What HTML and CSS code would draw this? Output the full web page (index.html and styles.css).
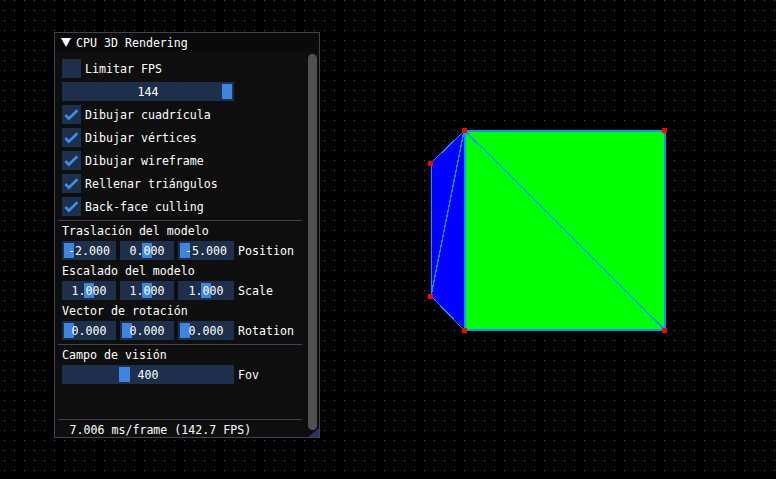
FILE: index.html
```html
<!DOCTYPE html>
<html lang="es">
<head>
<meta charset="utf-8">
<title>CPU 3D Rendering</title>
<link rel="stylesheet" href="styles.css">
</head>
<body>
<svg class="scene" width="776" height="479" viewBox="0 0 776 479" aria-hidden="true">
  <polygon class="face-blue" points="431,163 465,131 465,330 431,296"/>
  <rect class="face-green" x="465" y="131" width="199" height="199"/>
  <g class="wire">
    <line x1="431" y1="163" x2="431" y2="296"/>
    <line x1="431" y1="163" x2="464" y2="131"/>
    <line x1="431" y1="296" x2="464" y2="330"/>
    <line class="thick" x1="464" y1="131" x2="431" y2="296"/>
    <rect x="464.5" y="130.5" width="200" height="199"/>
    <line class="thick" x1="465" y1="131" x2="665" y2="330"/>
  </g>
  <g class="vertex">
    <rect x="462" y="128" width="5" height="5"/>
    <rect x="662" y="128" width="5" height="5"/>
    <rect x="462" y="328" width="5" height="5"/>
    <rect x="662" y="328" width="5" height="5"/>
    <rect x="428" y="161" width="5" height="5"/>
    <rect x="428" y="294" width="5" height="5"/>
  </g>
</svg>

<section class="window">
  <header class="title"><span class="arrow"></span><span>CPU 3D Rendering</span></header>
  <div class="content">
    <div class="main">
      <label class="check"><span class="box"></span>Limitar FPS</label>
      <div class="slider full"><span class="grab" style="left:160px"></span><span class="val">144</span></div>
      <label class="check"><span class="box"><svg viewBox="0 0 19 19" width="19" height="19"><polyline points="3.4,10 6.8,13.6 15.4,5.2"/></svg></span>Dibujar cuadrícula</label>
      <label class="check"><span class="box"><svg viewBox="0 0 19 19" width="19" height="19"><polyline points="3.4,10 6.8,13.6 15.4,5.2"/></svg></span>Dibujar vértices</label>
      <label class="check"><span class="box"><svg viewBox="0 0 19 19" width="19" height="19"><polyline points="3.4,10 6.8,13.6 15.4,5.2"/></svg></span>Dibujar wireframe</label>
      <label class="check"><span class="box"><svg viewBox="0 0 19 19" width="19" height="19"><polyline points="3.4,10 6.8,13.6 15.4,5.2"/></svg></span>Rellenar triángulos</label>
      <label class="check"><span class="box"><svg viewBox="0 0 19 19" width="19" height="19"><polyline points="3.4,10 6.8,13.6 15.4,5.2"/></svg></span>Back-face culling</label>
      <hr class="sep">
      <div class="text">Traslación del modelo</div>
      <div class="row">
        <div class="slider s1"><span class="grab" style="left:2px"></span><span class="val">-2.000</span></div>
        <div class="slider s2"><span class="grab" style="left:22px"></span><span class="val">0.000</span></div>
        <div class="slider s3"><span class="grab" style="left:2px"></span><span class="val">-5.000</span></div>
        <span class="lab">Position</span>
      </div>
      <div class="text">Escalado del modelo</div>
      <div class="row">
        <div class="slider s1"><span class="grab" style="left:22px"></span><span class="val">1.000</span></div>
        <div class="slider s2"><span class="grab" style="left:22px"></span><span class="val">1.000</span></div>
        <div class="slider s3"><span class="grab" style="left:23px"></span><span class="val">1.000</span></div>
        <span class="lab">Scale</span>
      </div>
      <div class="text">Vector de rotación</div>
      <div class="row">
        <div class="slider s1"><span class="grab" style="left:2px"></span><span class="val">0.000</span></div>
        <div class="slider s2"><span class="grab" style="left:2px"></span><span class="val">0.000</span></div>
        <div class="slider s3"><span class="grab" style="left:2px"></span><span class="val">0.000</span></div>
        <span class="lab">Rotation</span>
      </div>
      <hr class="sep">
      <div class="text">Campo de visión</div>
      <div class="row">
        <div class="slider full"><span class="grab wide" style="left:57px"></span><span class="val">400</span></div>
        <span class="lab">Fov</span>
      </div>
      <div class="footer">
        <hr class="sep">
        <div class="text fps">7.006 ms/frame (142.7 FPS)</div>
      </div>
    </div>
    <div class="scrollbar"><span class="thumb"></span></div>
  </div>
  <span class="grip"></span>
</section>
</body>
</html>
```

FILE: styles.css
```css
* { box-sizing: border-box; }

html, body { height: 100%; }

body {
  margin: 0;
  overflow: hidden;
  background-color: #000;
  background-image: conic-gradient(from 270deg at 1px 1px, #5a5a5a 25%, transparent 0);
  background-size: 10px 10px;
  background-position: 4px 0;
  color: #fff;
  font-family: "DejaVu Sans Mono", monospace;
  font-size: 11.62px;
  line-height: 15px;
}

.scene { position: absolute; left: 0; top: 0; shape-rendering: crispEdges; }
.face-blue { fill: #0000ff; }
.face-green { fill: #00ff00; }
.wire * { fill: none; stroke: #0a96ff; stroke-width: 1; }
.wire rect { stroke-width: 2; }
.wire .thick { stroke-width: 1.5; }
.vertex rect { fill: #ff0000; }

.window {
  position: absolute;
  left: 54px;
  top: 32px;
  width: 266px;
  height: 406px;
  display: flex;
  flex-direction: column;
  border: 1px solid #42424e;
  background: rgba(15, 15, 15, 0.94);
}

.title {
  flex: none;
  height: 19px;
  display: flex;
  align-items: center;
  gap: 5px;
  padding-left: 6px;
  padding-top: 1px;
  background: #0a0a0a;
}

.arrow {
  width: 0;
  height: 0;
  margin-top: -1px;
  border-left: 5px solid transparent;
  border-right: 5px solid transparent;
  border-top: 9px solid #fff;
}

.content { flex: 1; display: flex; min-height: 0; }

.main {
  flex: none;
  width: 248px;
  display: flex;
  flex-direction: column;
  gap: 4px;
  padding: 7px 0 0 7px;
}

.check { display: flex; align-items: center; gap: 4px; height: 19px; padding-top: 2px; }

.box { flex: none; width: 19px; height: 19px; margin-top: -2px; background: #1d2f4a; }
.box svg { display: block; }
.box polyline { fill: none; stroke: #3d8fef; stroke-width: 2.6; }

.row { display: flex; gap: 4px; height: 19px; align-items: center; }

.slider {
  position: relative;
  flex: none;
  height: 19px;
  display: flex;
  align-items: center;
  justify-content: center;
  background: #1d2f4a;
}
.full { width: 172px; }
.s1, .s2 { width: 54px; }
.s3 { width: 56px; }

.grab {
  position: absolute;
  top: 2px;
  width: 10px;
  height: 15px;
  background: #3d85e0;
}
.grab.wide { width: 11px; }
.val { position: relative; top: 1px; }
.lab { position: relative; top: 1px; }

.sep { height: 0; margin: 0 0 -1px -4px; width: 244px; border: 0; border-top: 1px solid #42424e; }

.text { height: 13px; }

.footer {
  margin-top: auto;
  display: flex;
  flex-direction: column;
  gap: 4px;
  padding-bottom: 1px;
}
.fps { padding-left: 7.5px; }

.scrollbar { flex: none; width: 16px; padding: 2px 2px 7px 5px; }
.thumb { display: block; height: 100%; border-radius: 5px; background: #505050; }

.grip {
  position: absolute;
  right: 0;
  bottom: 0;
  width: 0;
  height: 0;
  border-left: 11px solid transparent;
  border-bottom: 9px solid #1d3a5e;
}
```
